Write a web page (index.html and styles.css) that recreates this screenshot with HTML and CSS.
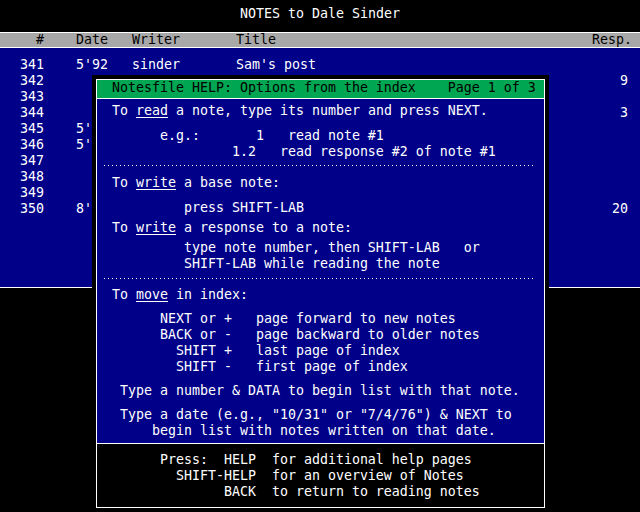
FILE: index.html
```html
<!DOCTYPE html>
<html>
<head>
<meta charset="utf-8">
<title>NOTES to Dale Sinder</title>
<link rel="stylesheet" href="styles.css">
</head>
<body>
<div class="screen">
  <div class="title">NOTES to Dale Sinder</div>
  <div class="index">
    <div class="hdr">
      <span class="c-num">#</span><span>Date</span><span>Writer</span><span>Title</span><span class="c-resp">Resp.</span>
    </div>
    <div class="rows">
      <div class="row"><span>341</span><span>5'92</span><span>sinder</span><span>Sam's post</span><span class="c-resp"></span></div>
      <div class="row"><span>342</span><span></span><span></span><span></span><span class="c-resp">9</span></div>
      <div class="row"><span>343</span><span></span><span></span><span></span><span class="c-resp"></span></div>
      <div class="row"><span>344</span><span></span><span></span><span></span><span class="c-resp">3</span></div>
      <div class="row"><span>345</span><span>5'</span><span></span><span></span><span class="c-resp"></span></div>
      <div class="row"><span>346</span><span>5'</span><span></span><span></span><span class="c-resp"></span></div>
      <div class="row"><span>347</span><span></span><span></span><span></span><span class="c-resp"></span></div>
      <div class="row"><span>348</span><span></span><span></span><span></span><span class="c-resp"></span></div>
      <div class="row"><span>349</span><span></span><span></span><span></span><span class="c-resp"></span></div>
      <div class="row"><span>350</span><span>8'</span><span></span><span></span><span class="c-resp">20</span></div>
    </div>
  </div>

  <div class="help">
    <div class="box">
      <div class="help-title">Notesfile HELP: Options from the index    Page 1 of 3</div>
      <div class="help-body">
        <div class="ln l-read">To <u>read</u> a note, type its number and press NEXT.</div>
        <div class="grp g-eg">
          <div class="ln">      e.g.:       1   read note #1</div>
          <div class="ln">               1.2   read response #2 of note #1</div>
        </div>
        <div class="dots d-1"></div>
        <div class="ln l-wbase">To <u>write</u> a base note:</div>
        <div class="ln l-press">         press SHIFT-LAB</div>
        <div class="ln l-wresp">To <u>write</u> a response to a note:</div>
        <div class="grp g-type">
          <div class="ln">         type note number, then SHIFT-LAB   or</div>
          <div class="ln">         SHIFT-LAB while reading the note</div>
        </div>
        <div class="dots d-2"></div>
        <div class="ln l-move">To <u>move</u> in index:</div>
        <div class="grp g-keys">
          <div class="ln">      NEXT or +   page forward to new notes</div>
          <div class="ln">      BACK or -   page backward to older notes</div>
          <div class="ln">        SHIFT +   last page of index</div>
          <div class="ln">        SHIFT -   first page of index</div>
        </div>
        <div class="ln l-num"> Type a number &amp; DATA to begin list with that note.</div>
        <div class="grp g-date">
          <div class="ln"> Type a date (e.g., "10/31" or "7/4/76") &amp; NEXT to</div>
          <div class="ln">     begin list with notes written on that date.</div>
        </div>
      </div>
      <div class="help-foot">
        <div class="ln">      Press:  HELP  for additional help pages</div>
        <div class="ln">        SHIFT-HELP  for an overview of Notes</div>
        <div class="ln">              BACK  to return to reading notes</div>
      </div>
    </div>
  </div>
</div>
</body>
</html>
```
FILE: styles.css
```css
html, body {
  margin: 0;
  padding: 0;
  background: #000;
}

.screen {
  position: relative;
  width: 640px;
  height: 512px;
  overflow: hidden;
  background: #000;
  color: #fff;
  font-family: "DejaVu Sans Mono", monospace;
  font-size: 13.29px;
  line-height: 16px;
}

.title {
  box-sizing: border-box;
  height: 32px;
  padding-top: 6px;
  text-align: center;
  white-space: pre;
}

.index {
  border-top: 1px solid #fff;
  border-bottom: 1px solid #fff;
}

.hdr {
  display: grid;
  grid-template-columns: 56px 56px 104px 1fr auto;
  height: 14px;
  line-height: 14px;
  padding: 0 8px 0 20px;
  background: #a8a8a8;
  color: #000;
  border-bottom: 1px solid #fff;
}

.hdr .c-num {
  padding-left: 16px;
}

.rows {
  box-sizing: border-box;
  height: 239px;
  padding: 9px 12px 0 20px;
  background: #000088;
}

.row {
  display: grid;
  grid-template-columns: 56px 56px 104px 1fr auto;
  height: 16px;
  white-space: pre;
}

.c-resp {
  text-align: right;
}

/* help overlay */
.help {
  position: absolute;
  left: 92px;
  top: 75px;
  padding: 4px;
  background: #000;
}

.box {
  width: 447px;
  border: 1px solid #fff;
}

.help-title {
  box-sizing: border-box;
  height: 19px;
  padding-left: 15px;
  background: #00a651;
  color: #000;
  border-bottom: 1px solid #fff;
  white-space: pre;
}

.help-body {
  box-sizing: border-box;
  height: 345px;
  padding-top: 4px;
  padding-left: 15px;
  background: #000088;
  border-bottom: 1px solid #fff;
}

.ln {
  height: 16px;
  white-space: pre;
}

.ln u {
  text-decoration: underline;
  text-decoration-thickness: 1px;
  text-underline-offset: 2px;
}

.g-eg { margin-top: 9px; }
.l-wbase { margin-top: 9px; }
.l-press { margin-top: 9px; }
.l-wresp { margin-top: 4px; }
.g-type { margin-top: 4px; }
.l-move { margin-top: 8px; }
.g-keys { margin-top: 8px; }
.l-num { margin-top: 8px; }
.g-date { margin-top: 8px; }

.dots {
  width: 432px;
  height: 1px;
  margin-left: -8px;
  background: repeating-linear-gradient(to right, #fff 0 1px, transparent 1px 4px);
}

.d-1 { margin-top: 5px; }
.d-2 { margin-top: 6px; }

.help-foot {
  box-sizing: border-box;
  height: 63px;
  padding-top: 8px;
  padding-left: 15px;
  background: #000;
}
```
